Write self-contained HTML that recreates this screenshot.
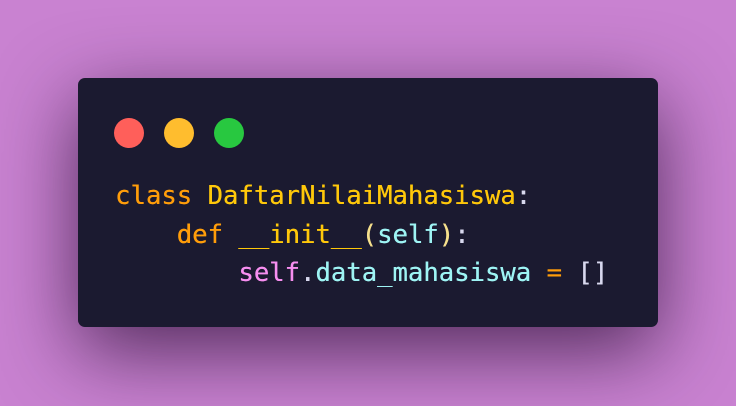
<!DOCTYPE html>
<html><head><style>
html,body{margin:0;padding:0;}
body{width:736px;height:406px;overflow:hidden;background:#c982d1;position:relative;}
.card{position:absolute;left:78px;top:78px;width:580px;height:249px;background:#1b1a30;border-radius:7px;box-shadow:0 24px 80px rgba(30,5,40,0.7);}
.dot{position:absolute;top:118px;width:30px;height:30px;border-radius:50%;}
pre{position:absolute;left:115px;top:177px;margin:0;font-family:"DejaVu Sans Mono","Liberation Mono",monospace;font-size:25.6px;line-height:38.5px;color:#e0e0f0;text-shadow:0.3px 0 0 currentColor;}
.k{color:#ff9d0a}.c{color:#ffc80a}.s{color:#9ef4f4}.p{color:#f78ef0}.w{color:#d8d8ee}.y{color:#f6e08c}
</style></head><body>
<div class="card"></div>
<div class="dot" style="left:114px;background:#ff5f5a"></div>
<div class="dot" style="left:164px;background:#ffbd2e"></div>
<div class="dot" style="left:214px;background:#28c840"></div>
<pre><span class="k">class</span> <span class="c">DaftarNilaiMahasiswa</span><span class="w">:</span>
    <span class="k">def</span> <span class="c">__init__</span><span class="y">(</span><span class="s">self</span><span class="y">)</span><span class="w">:</span>
        <span class="p">self</span><span class="w">.</span><span class="s">data_mahasiswa</span> <span class="k">=</span> <span class="w">[]</span></pre>
</body></html>
